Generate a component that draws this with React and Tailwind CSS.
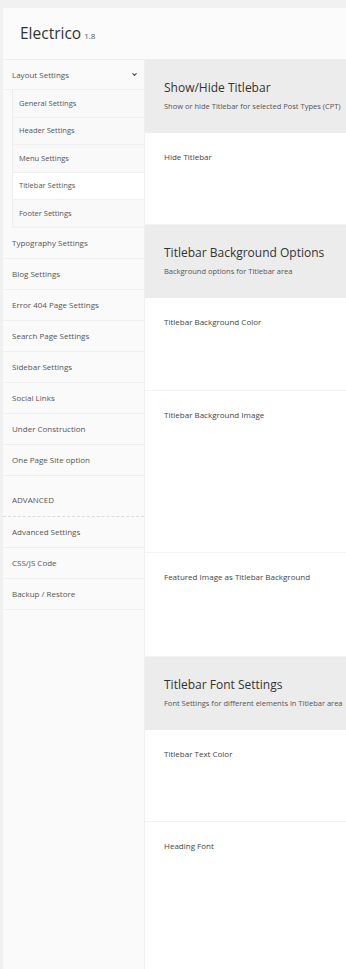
import { ChevronDown } from 'lucide-react';

const subItems = ['General Settings', 'Header Settings', 'Menu Settings', 'Titlebar Settings', 'Footer Settings'];
const mainItems = [
  'Typography Settings',
  'Blog Settings',
  'Error 404 Page Settings',
  'Search Page Settings',
  'Sidebar Settings',
  'Social Links',
  'Under Construction',
  'One Page Site option',
];
const advancedItems = ['Advanced Settings', 'CSS/JS Code', 'Backup / Restore'];

function SectionHead({ title, desc }) {
  return (
    <div className="h-[73px] bg-[#ececec] pl-[19px] pt-[19px] whitespace-nowrap overflow-hidden">
      <h2 className="text-[12px] leading-[18px] text-[#333]">{title}</h2>
      <p className="text-[7.5px] leading-[12px] mt-[3px] text-[#555]">{desc}</p>
    </div>
  );
}

function Row({ label, h }) {
  return (
    <div className={`${h} border-b border-[#f3f3f3] pl-[19px] pt-[18px]`}>
      <div className="text-[8px] leading-[12px] text-[#444] whitespace-nowrap">{label}</div>
    </div>
  );
}

export default function App() {
  return (
    <div
      className="min-h-[969px] h-[969px] overflow-hidden bg-[#f1f1f1] pt-2 pl-[3px]"
      style={{ fontFamily: '"Open Sans", "Noto Sans", sans-serif' }}
    >
      <div className="bg-white h-full flex flex-col">
        {/* Header */}
        <div className="h-[52px] shrink-0 bg-[#fbfbfb] border-b border-[#eeeeee] flex items-center pl-[17px]">
          <div className="flex items-baseline gap-[3px]">
            <span className="text-[15.5px] text-[#333] leading-none">Electrico</span>
            <span className="text-[8px] text-[#555] leading-none">1.8</span>
          </div>
        </div>

        <div className="flex flex-1">
          {/* Sidebar */}
          <div className="w-[142px] shrink-0 bg-[#fafafa] border-r border-[#f0f0f0]">
            <div className="h-[30px] flex items-center justify-between pl-[9px] pr-[6px] border-b border-[#f0f0f0]">
              <span className="text-[8px] text-[#555]">Layout Settings</span>
              <ChevronDown className="w-[7px] h-[7px] text-[#444]" strokeWidth={3.5} />
            </div>
            <div className="ml-[9px] border-l border-[#eeeeee]">
              {subItems.map((s) => (
                <div
                  key={s}
                  className={`h-[27.5px] flex items-center pl-[6px] border-b border-[#f0f0f0] ${
                    s === 'Titlebar Settings' ? 'bg-white' : 'bg-[#f9f9f9]'
                  }`}
                >
                  <span className="text-[7.5px] text-[#555]">{s}</span>
                </div>
              ))}
            </div>
            {mainItems.map((m) => (
              <div key={m} className="h-[31px] flex items-center pl-[9px] border-b border-[#f0f0f0]">
                <span className="text-[8px] text-[#555]">{m}</span>
              </div>
            ))}
            <div className="h-[41px] flex items-end pb-[10px] pl-[9px] border-b border-dashed border-[#dddddd]">
              <span className="text-[8px] text-[#555]">ADVANCED</span>
            </div>
            {advancedItems.map((m) => (
              <div key={m} className="h-[31px] flex items-center pl-[9px] border-b border-[#f0f0f0]">
                <span className="text-[8px] text-[#555]">{m}</span>
              </div>
            ))}
          </div>

          {/* Content */}
          <div className="flex-1 min-w-0 bg-white">
            <SectionHead title="Show/Hide Titlebar" desc="Show or hide Titlebar for selected Post Types (CPT)" />
            <Row label="Hide Titlebar" h="h-[92px]" />
            <SectionHead title="Titlebar Background Options" desc="Background options for Titlebar area" />
            <Row label="Titlebar Background Color" h="h-[93px]" />
            <Row label="Titlebar Background Image" h="h-[162px]" />
            <Row label="Featured Image as Titlebar Background" h="h-[104px]" />
            <SectionHead title="Titlebar Font Settings" desc="Font Settings for different elements in Titlebar area" />
            <Row label="Titlebar Text Color" h="h-[92px]" />
            <Row label="Heading Font" h="h-[160px]" />
          </div>
        </div>
      </div>
    </div>
  );
}
